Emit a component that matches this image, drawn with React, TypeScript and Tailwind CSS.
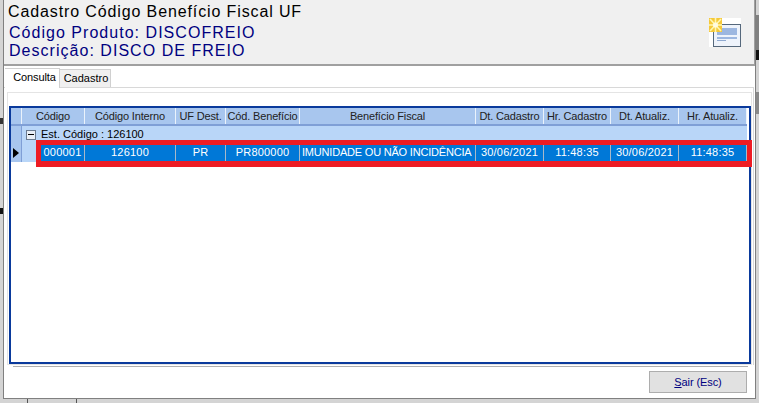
const cols = [
  { w: 'w-[63px]', h: 'Código', v: '000001' },
  { w: 'w-[91px]', h: 'Código Interno', v: '126100' },
  { w: 'w-[50px]', h: 'UF Dest.', v: 'PR' },
  { w: 'w-[74px]', h: 'Cód. Benefício', v: 'PR800000' },
  { w: 'w-[176px]', h: 'Benefício Fiscal', v: 'IMUNIDADE OU NÃO INCIDÊNCIA' },
  { w: 'w-[68px]', h: 'Dt. Cadastro', v: '30/06/2021' },
  { w: 'w-[67px]', h: 'Hr. Cadastro', v: '11:48:35' },
  { w: 'w-[68px]', h: 'Dt. Atualiz.', v: '30/06/2021' },
  { w: 'w-[68px]', h: 'Hr. Atualiz.', v: '11:48:35' },
];

function WindowIcon() {
  return (
    <svg width="32" height="29" viewBox="0 0 32 29" className="block">
      <rect x="0" y="0" width="32" height="29" fill="#ffffff" />
      <rect x="4.5" y="6.5" width="27" height="22" fill="#eef3fb" stroke="#55687c" strokeWidth="1" />
      <rect x="8" y="10" width="20" height="7" fill="#9db7e0" />
      <rect x="8" y="19" width="20" height="2" fill="#9db7e0" />
      <rect x="8" y="22" width="9" height="1" fill="#8fa9d0" />
      <rect x="0" y="0" width="13" height="14" fill="#f5c93a" />
      <path d="M6.5 0v14M0 7h13M1 1l11 12M12 1L1 13" stroke="#fff6b0" strokeWidth="1.6" />
      <circle cx="6.5" cy="7" r="2.5" fill="#fffbe0" />
    </svg>
  );
}

export default function App() {
  return (
    <div className="w-[759px] h-[403px] overflow-hidden relative bg-[#d4d4d4] pl-[3px] pr-[3px] pb-[4px] font-['Liberation_Sans',sans-serif]">
      {/* Desktop behind the dialog */}
      <div className="absolute right-0 top-[15px] w-[3px] h-[35px] bg-[#808080]" />
      <div className="absolute right-0 top-[50px] w-[3px] h-[10px] bg-[#111111]" />
      <div className="absolute right-0 top-[92px] w-[3px] h-[22px] bg-[#888888]" />
      <div className="absolute left-0 top-[118px] w-[3px] h-[6px] bg-[#333333]" />
      <div className="absolute left-0 top-[208px] w-[3px] h-[6px] bg-[#111111]" />
      <div className="absolute bottom-0 left-[27px] w-[1px] h-[4px] bg-[#555555]" />
      <div className="absolute bottom-0 left-[76px] w-[1px] h-[4px] bg-[#555555]" />

      <div className="h-full bg-white border-r-[1px] border-l-[1px] border-b-[1px] border-[#808080] flex flex-col relative">
        {/* Header */}
        <div className="h-[66px] shrink-0 bg-[#f0f0f0] border-b-[2px] border-r-[1px] border-[#a0a0a0] flex justify-between pl-[4px] pr-[13px]">
          <div className="flex flex-col text-[16px] leading-[19px] pt-[2px]">
            <span className="text-black tracking-[0.88px] mb-[2px]">Cadastro Código Benefício Fiscal UF</span>
            <span className="text-[#000080] tracking-[1.03px] pl-[1px]">Código Produto: DISCOFREIO</span>
            <span className="text-[#000080] tracking-[1.03px] pl-[1px] -mt-[1px]">Descrição: DISCO DE FREIO</span>
          </div>
          <div className="pt-[18px]">
            <WindowIcon />
          </div>
        </div>

        {/* Tabs */}
        <div className="h-[21px] shrink-0 flex pl-[1px] items-end text-[11px] text-black">
          <div className="w-[55px] h-[20px] bg-white border-t-[1px] border-r-[1px] border-[#d0d0d0] flex items-center justify-center pb-[3px] pl-[5px] -mb-[1px] z-10 tracking-[-0.1px]">
            Consulta
          </div>
          <div className="w-[51px] h-[18px] bg-[#f0f0f0] border-t-[1px] border-r-[1px] border-[#d0d0d0] flex items-center justify-center pl-[2px]">
            Cadastro
          </div>
        </div>

        {/* Tab panel */}
        <div className="flex-1 border-t-[1px] border-r-[1px] border-[#d8d8d8] mr-[1px] pt-[4px] pl-[3px] pr-[1px] flex flex-col min-h-0 text-[11px]">
          <div className="flex-1 border-[1px] border-[#e4e4e4] p-[1px] pt-[13px] pr-0 pb-0 flex flex-col min-h-0">
            <div className="flex-1 border-[2px] border-[#0a3a9c] bg-white flex flex-col min-h-0">
              {/* Column header */}
              <div className="h-[18px] shrink-0 flex bg-[#a8c6ee] border-b-[2px] border-[#7f9fd6] mr-[2px] tracking-[-0.15px]">
                <div className="w-[11px] border-r-[1px] border-[#eaf2fb]" />
                {cols.map((c) => (
                  <div
                    key={c.h}
                    className={`${c.w} shrink-0 flex items-center justify-center whitespace-nowrap text-[#222222] border-r-[1px] border-[#eaf2fb]`}
                  >
                    {c.h}
                  </div>
                ))}
              </div>
              {/* Group row */}
              <div className="h-[18px] shrink-0 flex bg-[#b9d6f8] mr-[2px]">
                <div className="w-[11px] bg-[#a8c6ee] border-r-[1px] border-[#7f9fd6]" />
                <div className="flex items-center pl-[4px] text-black gap-[5px] pb-[1px]">
                  <div className="w-[10px] h-[10px] bg-[#e8eef6] border-[1px] border-[#6a7a90] flex items-center justify-center">
                    <div className="w-[6px] h-[1px] bg-black" />
                  </div>
                  <span>Est. Código : 126100</span>
                </div>
              </div>
              {/* Data row */}
              <div className="h-[18px] shrink-0 flex bg-[#0078d7] mr-[2px] text-white">
                <div className="w-[11px] shrink-0 bg-[#a8c6ee] border-r-[1px] border-[#7f9fd6] flex items-center justify-center">
                  <div className="w-0 h-0 border-y-[5px] border-y-transparent border-l-[6px] border-l-black" />
                </div>
                <div className="w-[19px] shrink-0 bg-[#b9d6f8]" />
                {cols.map((c, i) => (
                  <div
                    key={c.h}
                    className={`${i === 0 ? 'w-[44px]' : c.w} ${i === 4 ? 'justify-start pl-[2px] tracking-[-0.2px]' : 'justify-center tracking-[0.2px]'} shrink-0 flex items-center whitespace-nowrap border-r-[1px] border-[#a8b8c8] border-b-[1px] border-b-[#f08a24]`}
                  >
                    {c.v}
                  </div>
                ))}
              </div>
            </div>
          </div>
        </div>

        {/* Line under the tab panel */}
        <div className="h-[1px] shrink-0 bg-[#b0b0b0] mt-[1px] ml-[9px] mr-[7px]" />

        {/* Footer */}
        <div className="h-[31px] shrink-0 flex justify-end items-start pt-[4px] pr-[8px]">
          <button className="w-[98px] h-[22px] bg-[#e1e1e1] border-[1px] border-[#adadad] text-[11px] text-[#000080] flex items-center justify-center tracking-[-0.1px]">
            <span><span className="underline">S</span>air (Esc)</span>
          </button>
        </div>

        {/* Red highlight drawn over the grid */}
        <div className="absolute left-[32px] top-[140px] w-[716px] h-[27px] border-[5px] border-b-[6px] border-[#ed1c24]" />
      </div>
    </div>
  );
}
